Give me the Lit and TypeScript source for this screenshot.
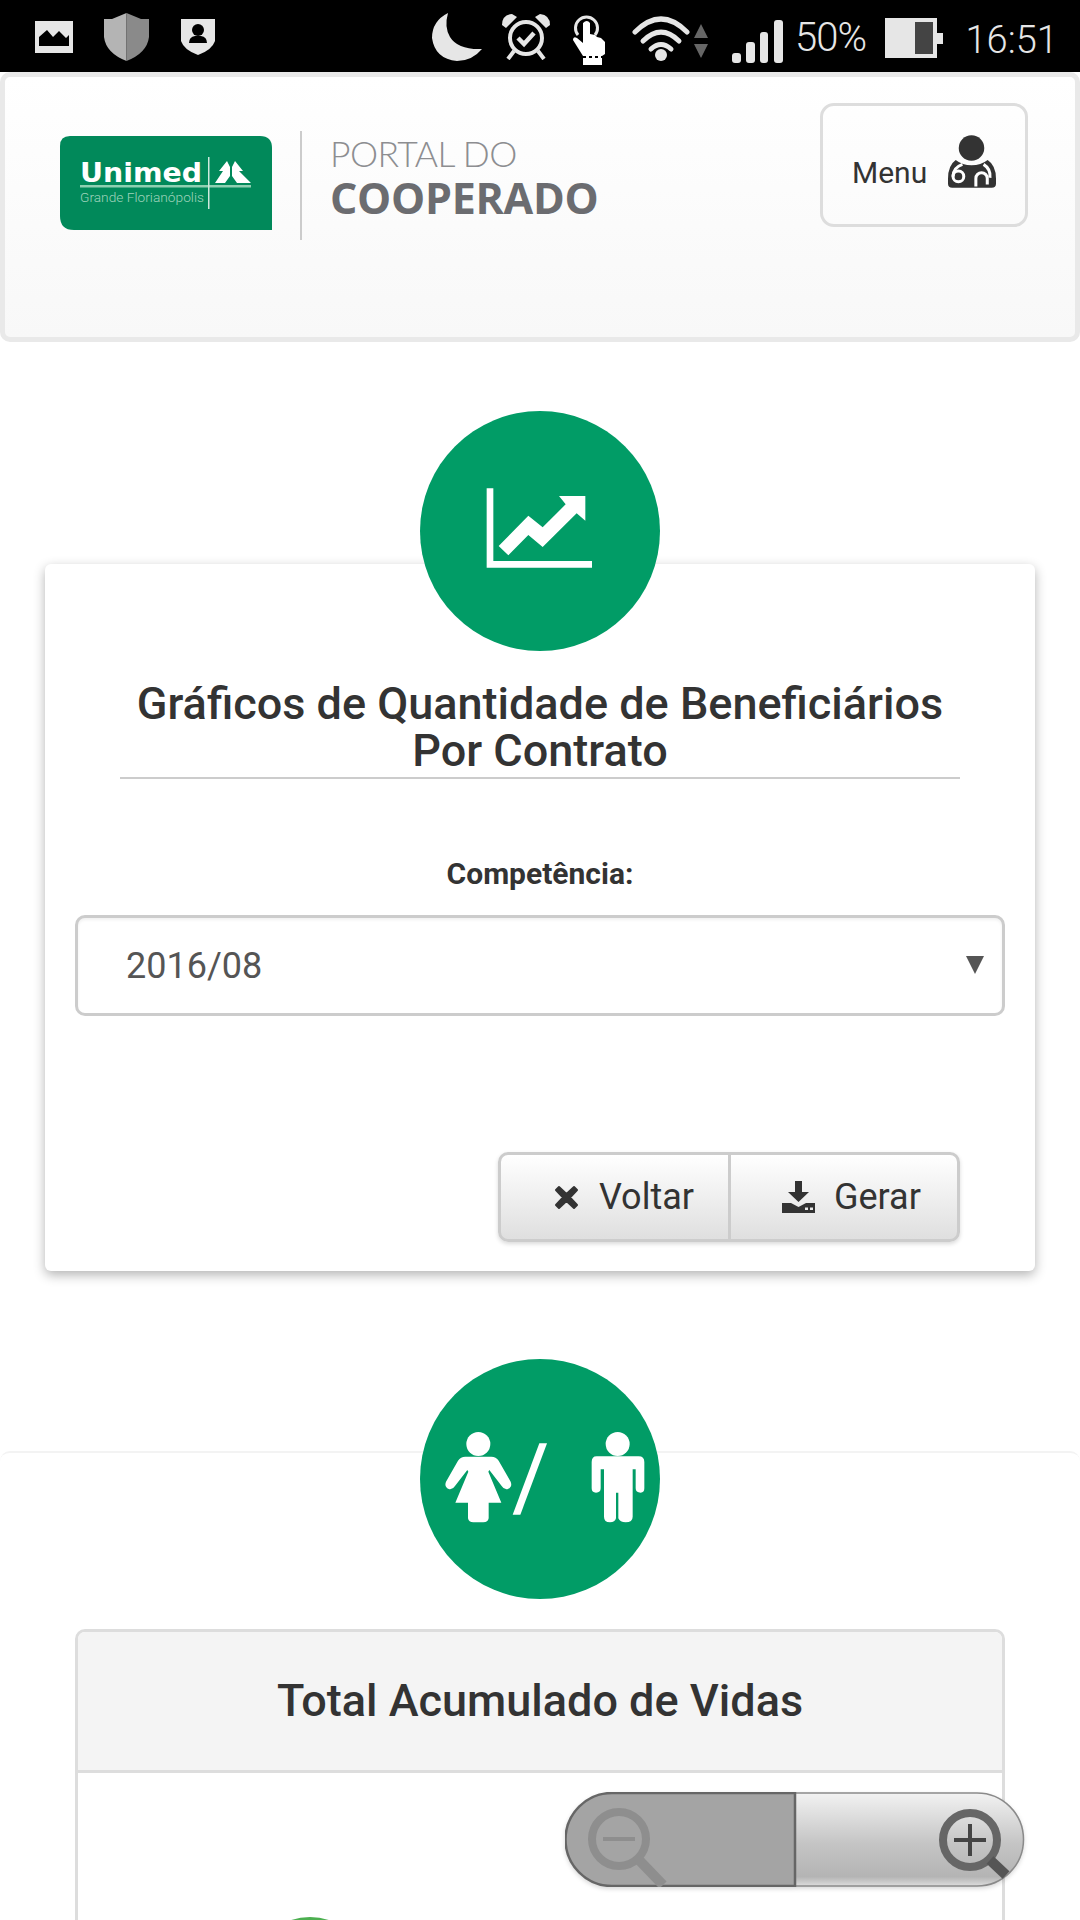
import { LitElement, html, css } from "lit";
import { customElement } from "lit/decorators.js";

@customElement("app-root")
export class AppRoot extends LitElement {
  static styles = css`
    :host { display: block; height: 1920px; overflow: hidden; background: #fff; font-family: Roboto, "Liberation Sans", sans-serif; color: #333; }
    svg { display: block; flex: none; }
    .status { height: 72px; background: #000; display: flex; align-items: flex-start; color: #e6e6e6; box-sizing: border-box; position: relative; }
    .st { font-weight: 300; }
    .i-img { margin: 21px 0 0 35px; } .i-shield { margin: 13px 0 0 31px; } .i-badge { margin: 19px 0 0 32px; }
    .i-moon { margin: 13px 0 0 217px; } .i-alarm { margin: 13px 0 0 18px; } .i-touch { margin: 10px 0 0 20px; }
    .i-wifi { margin: 14px 0 0 26px; } .i-sig { margin: 20px 0 0 24px; }
    .t50 { margin: 15px 0 0 12px; width: 89.5px; flex: none; font-size: 40px; line-height: 46px; letter-spacing: -1px; } .i-bat { margin: 18px 0 0 0; } .time { margin: 18px 0 0 23px; font-size: 38px; line-height: 44px; }

    .header { height: 270px; box-sizing: border-box; border: 5px solid #e9e9e9; border-radius: 10px; background: linear-gradient(#fff, #f8f8f8); display: flex; align-items: flex-start; padding: 26px 47px 0 55px; }
    .logo { margin-top: 33px; }
    .sep { width: 2px; height: 109px; background: #ccc; margin: 28px 28px 0 28px; }
    .brand { margin-top: 30px; color: #6b6c70; font-family: "Open Sans", Lato, sans-serif; }
    .brand .a { font-size: 35.5px; font-weight: 300; color: #8d8e91; line-height: 42px; letter-spacing: -0.6px; font-family: Lato, sans-serif; }
    .brand .b { font-size: 43px; font-weight: 700; line-height: 46px; letter-spacing: -0.3px; }
    .menu { margin-left: auto; width: 208px; height: 124px; box-sizing: border-box; border: 3px solid #ddd; border-radius: 14px; display: flex; align-items: center; padding-left: 29px; font-size: 30px; gap: 21px; color: #333; }
    .menu span { margin-top: 14px; }
    .menu svg { margin-top: -8px; }

    .main { display: flex; flex-direction: column; align-items: center; }
    .circle { width: 240px; height: 240px; border-radius: 50%; background: #019c66; position: relative; z-index: 2; flex: none; }
    .c1 { margin-top: 69px; }
    .card { width: 990px; height: 707px; margin-top: -87px; background: #fff; border-radius: 6px; box-shadow: 0 4px 12px rgba(0,0,0,.3); box-sizing: border-box; padding: 116px 30px 0; display: flex; flex-direction: column; }
    .title { margin: 0 45px; border-bottom: 2px solid #ccc; text-align: center; font-size: 45px; font-weight: 500; line-height: 47px; padding-bottom: 3px; color: #333; }
    .label { text-align: center; font-size: 30px; font-weight: 700; line-height: 36px; margin-top: 77px; }
    .select { height: 101px; margin-top: 23px; border: 3px solid #ccc; border-radius: 10px; box-sizing: border-box; display: flex; align-items: center; justify-content: space-between; padding: 0 18px 0 48px; font-size: 36px; color: #555; box-shadow: inset 0 2px 3px rgba(0,0,0,.06); }
    .arrow { width: 0; height: 0; border-left: 9px solid transparent; border-right: 9px solid transparent; border-top: 18px solid #555; margin-top: -2px; }
    .btns { display: flex; align-self: flex-end; margin: 136px 45px 0 0; border: 3px solid #ccc; border-radius: 10px; background: linear-gradient(#fff, #dfdfdf); box-shadow: 0 2px 4px rgba(0,0,0,.15); height: 90px; box-sizing: border-box; font-size: 36px; }
    .btn { display: flex; align-items: center; box-sizing: border-box; }
    .b1 { width: 230px; padding-left: 53px; gap: 20px; border-right: 3px solid #ccc; }
    .b2 { width: 226px; padding-left: 51px; gap: 19px; }

    .c2 { margin-top: 88px; }
    .panel { width: 100%; margin-top: -148px; height: 600px; background: #fff; border-top: 2px solid #f3f3f3; border-radius: 10px; box-sizing: border-box; padding: 176px 75px 0; }
    .inner { border: 3px solid #ddd; border-radius: 10px; height: 400px; box-sizing: border-box; overflow: hidden; display: flex; flex-direction: column; align-items: center; }
    .inner h2 { margin: 0; width: 100%; height: 141px; background: #f4f4f4; border-bottom: 3px solid #ddd; flex: none; display: flex; align-items: center; justify-content: center; font-size: 45px; font-weight: 500; color: #333; box-sizing: border-box; padding-bottom: 2px; }
    .dot { width: 120px; height: 120px; border-radius: 50%; background: #4caf50; margin-top: 144px; margin-right: 460px; flex: none; }

    .zoom { position: absolute; left: 565px; top: 1792px; width: 460px; height: 95px; z-index: 5; filter: drop-shadow(0 2px 2px rgba(0,0,0,.15)); }
  `;

  render() {
    return html`
      <div class="status">
        <svg class="i-img" width="38" height="32" viewBox="0 0 38 32"><path fill="#e6e6e6" fill-rule="evenodd" d="M0 0H38V32H0ZM4 25H34V14L31 17 24 10 18 16 12 9 4 16Z"/></svg>
        <svg class="i-shield" width="45" height="48" viewBox="0 0 45 48"><path fill="#b4b4b4" d="M22.500 0 L8 6 L0 6 V24 Q2 40 22.500 48Z"/><path fill="#8a8a8a" d="M22.500 0 L37 6 L45 6 V24 Q43 40 22.500 48Z"/></svg>
        <svg class="i-badge" width="34" height="36" viewBox="0 0 34 36"><path fill="#e6e6e6" d="M0 0H34V22Q31 31 17 36 3 31 0 22Z"/><circle cx="17" cy="11" r="6" fill="#000"/><path fill="#000" d="M8 24Q8 18 14 17H20Q26 18 26 24Z"/></svg>
        <svg class="i-moon" width="50" height="48" viewBox="0 0 50 48"><path fill="#e6e6e6" d="M16 0Q12 14 18 24 26 37 50 36 40 48 25 48 3 46 0 25 0 8 16 0Z"/></svg>
        <svg class="i-alarm" width="52" height="47" viewBox="0 0 52 47" fill="none" stroke="#e6e6e6"><circle cx="26" cy="25" r="16" stroke-width="4"/><path stroke-width="4.500" d="M18 25 L24 31 L34 20"/><path stroke-width="4" d="M14 38 L8 46M38 38 L44 46"/><path fill="#e6e6e6" stroke="none" d="M2 12Q2 2 12 1L17 4 6 15ZM50 12Q50 2 40 1L35 4 46 15Z"/></svg>
        <svg class="i-touch" width="34" height="55" viewBox="0 0 34 55"><path fill="none" stroke="#e6e6e6" stroke-width="3" d="M6 25A11 11 0 1 1 23 25"/><path fill="#fff" d="M11 13Q15 9 18 13V24L23 25 25 27 29 28 33 32V44L30 46V55H11V46L1 30Q1 26 5 28L11 33Z"/><path stroke="#000" stroke-width="2" stroke-dasharray="3 3" d="M11 47H31"/></svg>
        <svg class="i-wifi" width="76" height="47" viewBox="0 0 76 47"><g fill="none" stroke="#e6e6e6" stroke-width="5" stroke-linecap="round"><path d="M3 18Q29 -8 55 18"/><path d="M11 27Q29 9 47 27"/><path d="M19 35Q29 26 39 35"/></g><circle cx="29" cy="41" r="6" fill="#e6e6e6"/><path fill="#666" d="M69 10L76 24H62ZM69 44L62 30H76Z"/></svg>
        <svg class="i-sig" width="51" height="43" viewBox="0 0 51 43" fill="#e6e6e6"><rect x="0" y="33" width="9" height="10" rx="3"/><rect x="14" y="22" width="9" height="21" rx="3"/><rect x="28" y="12" width="8" height="31" rx="3"/><rect x="42" y="0" width="9" height="43" rx="3"/></svg>
        <span class="st t50">50%</span>
        <svg class="i-bat" width="58" height="40" viewBox="0 0 58 40"><path fill="#e6e6e6" d="M0 0H52V15H58V26H52V40H0Z"/><rect x="30" y="4" width="18" height="32" fill="#444"/></svg>
        <span class="st time">16:51</span>
      </div>
      <header class="header">
        <svg class="logo" width="212" height="94" viewBox="0 0 212 94">
          <path fill="#01895a" d="M10 0H200Q212 0 212 12V94H14Q0 94 0 80V10Q0 0 10 0Z"/>
          <text x="20" y="46" fill="#fff" font-family="DejaVu Sans, Liberation Sans, sans-serif" font-weight="700" font-size="27" textLength="122" lengthAdjust="spacingAndGlyphs">Unimed</text>
          <rect x="20" y="49" width="171" height="2.500" fill="#8fd0b2"/>
          <rect x="148" y="21" width="1.500" height="52" fill="#cfe9dd"/>
          <text x="20" y="66" fill="#9fd3bb" font-family="Roboto, sans-serif" font-weight="300" font-size="13" textLength="124" lengthAdjust="spacingAndGlyphs">Grande Florianópolis</text>
          <path fill="#fff" d="M167 25L159 35H163L155 47H165L170 40V31ZM175 25L183 35H179L191 47H177L172 40V31Z"/>
        </svg>
        <div class="sep"></div>
        <div class="brand"><div class="a">PORTAL DO</div><div class="b">COOPERADO</div></div>
        <div class="menu"><span>Menu</span>
          <svg width="48" height="53" viewBox="447 135 143 157"><circle cx="517" cy="173" r="38" fill="#333"/><path fill="#333" d="M470 209Q447 225 447 265V280Q447 292 460 292H577Q590 292 590 280V265Q590 225 565 209Q545 225 517 225Q490 225 470 209Z"/><g fill="none" stroke="#fff" stroke-width="9"><path d="M490 222Q462 232 462 258"/><circle cx="478" cy="258" r="16"/><path d="M530 288V264A17 17 0 0 1 564 264V282"/><path d="M553 222Q575 236 572 262"/></g><circle cx="478" cy="258" r="6" fill="#333"/></svg>
        </div>
      </header>
      <main class="main">
        <div class="circle c1">
          <svg width="240" height="240" viewBox="60 33 720 720"><path fill="#fff" d="M260 265H280V483H576V503H260Z"/><path fill="#fff" d="M296 438L385 347 428 382 497 313 477 288H556V362L530 340 428 441 385 405 325 466Z"/></svg>
        </div>
        <section class="card">
          <div class="title">Gráficos de Quantidade de Beneficiários<br />Por Contrato</div>
          <div class="label">Competência:</div>
          <div class="select"><span>2016/08</span><span class="arrow"></span></div>
          <div class="btns">
            <div class="btn b1">
              <svg width="25" height="25" viewBox="0 0 25 25"><path fill="#333" stroke="#333" stroke-width="2" stroke-linejoin="round" d="M5 2L12.500 9 20 2 23 5 16 12.500 23 20 20 23 12.500 16 5 23 2 20 9 12.500 2 5Z"/></svg>
              <span>Voltar</span>
            </div>
            <div class="btn b2">
              <svg width="33" height="32" viewBox="0 0 33 32"><path fill="#333" d="M13 0H20V11H27L16.500 21 6 11H13Z"/><path fill="#333" fill-rule="evenodd" d="M0 22H9L16.500 26 24 22H33V32H0ZM23 26.500h3v2.500h-3ZM28 26.500h3v2.500h-3Z"/></svg>
              <span>Gerar</span>
            </div>
          </div>
        </section>
        <div class="circle c2">
          <svg width="240" height="240" viewBox="60 27 720 720"><g fill="#fff"><circle cx="235" cy="282" r="36"/><path d="M196 320H274Q288 320 296 332L332 395Q338 410 324 417 312 420 305 408L268 360 265 365 304 458H266V505Q264 517 250 517H220Q206 517 204 505V458H166L205 365 202 360 165 408Q158 420 146 417 132 410 138 395L174 332Q182 320 196 320Z"/><path d="M418 280H441L361 494H338Z"/><circle cx="653" cy="282" r="36"/><path d="M590 319H716Q733 319 733 336V415Q733 428 722 428 707 428 707 415V358H698V500Q698 517 677 517 660 517 655 505V428H648V505Q645 517 630 517 612 517 612 500V358H602V415Q602 428 588 428 575 428 575 415V336Q575 319 590 319Z"/></g></svg>
        </div>
        <section class="panel">
          <div class="inner">
            <h2>Total Acumulado de Vidas</h2>
            <div class="dot"></div>
          </div>
        </section>
      </main>
      <svg class="zoom" width="460" height="95" viewBox="0 0 460 95">
        <defs><linearGradient id="zg" x1="0" y1="0" x2="0" y2="1"><stop offset="0" stop-color="#f2f2f2"/><stop offset=".55" stop-color="#c4c4c4"/><stop offset=".9" stop-color="#b4b4b4"/><stop offset="1" stop-color="#dcdcdc"/></linearGradient></defs>
        <path fill="url(#zg)" stroke="#8a8a8a" stroke-width="1.500" d="M230 1H412A46.500 46.500 0 0 1 412 94H230Z"/>
        <path fill="#a4a4a4" stroke="#666" stroke-width="2.500" d="M230 1H47A46.500 46.500 0 0 0 47 94H230Z"/>
        <g fill="none" stroke="#8e8e8e"><circle cx="54" cy="47" r="27" stroke-width="8"/><path stroke-width="10" d="M74 68L98 93"/><path stroke-width="4" d="M38 47H70"/></g>
        <g fill="none"><circle cx="405" cy="48" r="27" stroke="#666" stroke-width="8"/><path stroke="#555" stroke-width="10" d="M425 68L441 83"/><path stroke="#444" stroke-width="4" d="M389 48H421M405 32V64"/></g>
      </svg>
    `;
  }
}
